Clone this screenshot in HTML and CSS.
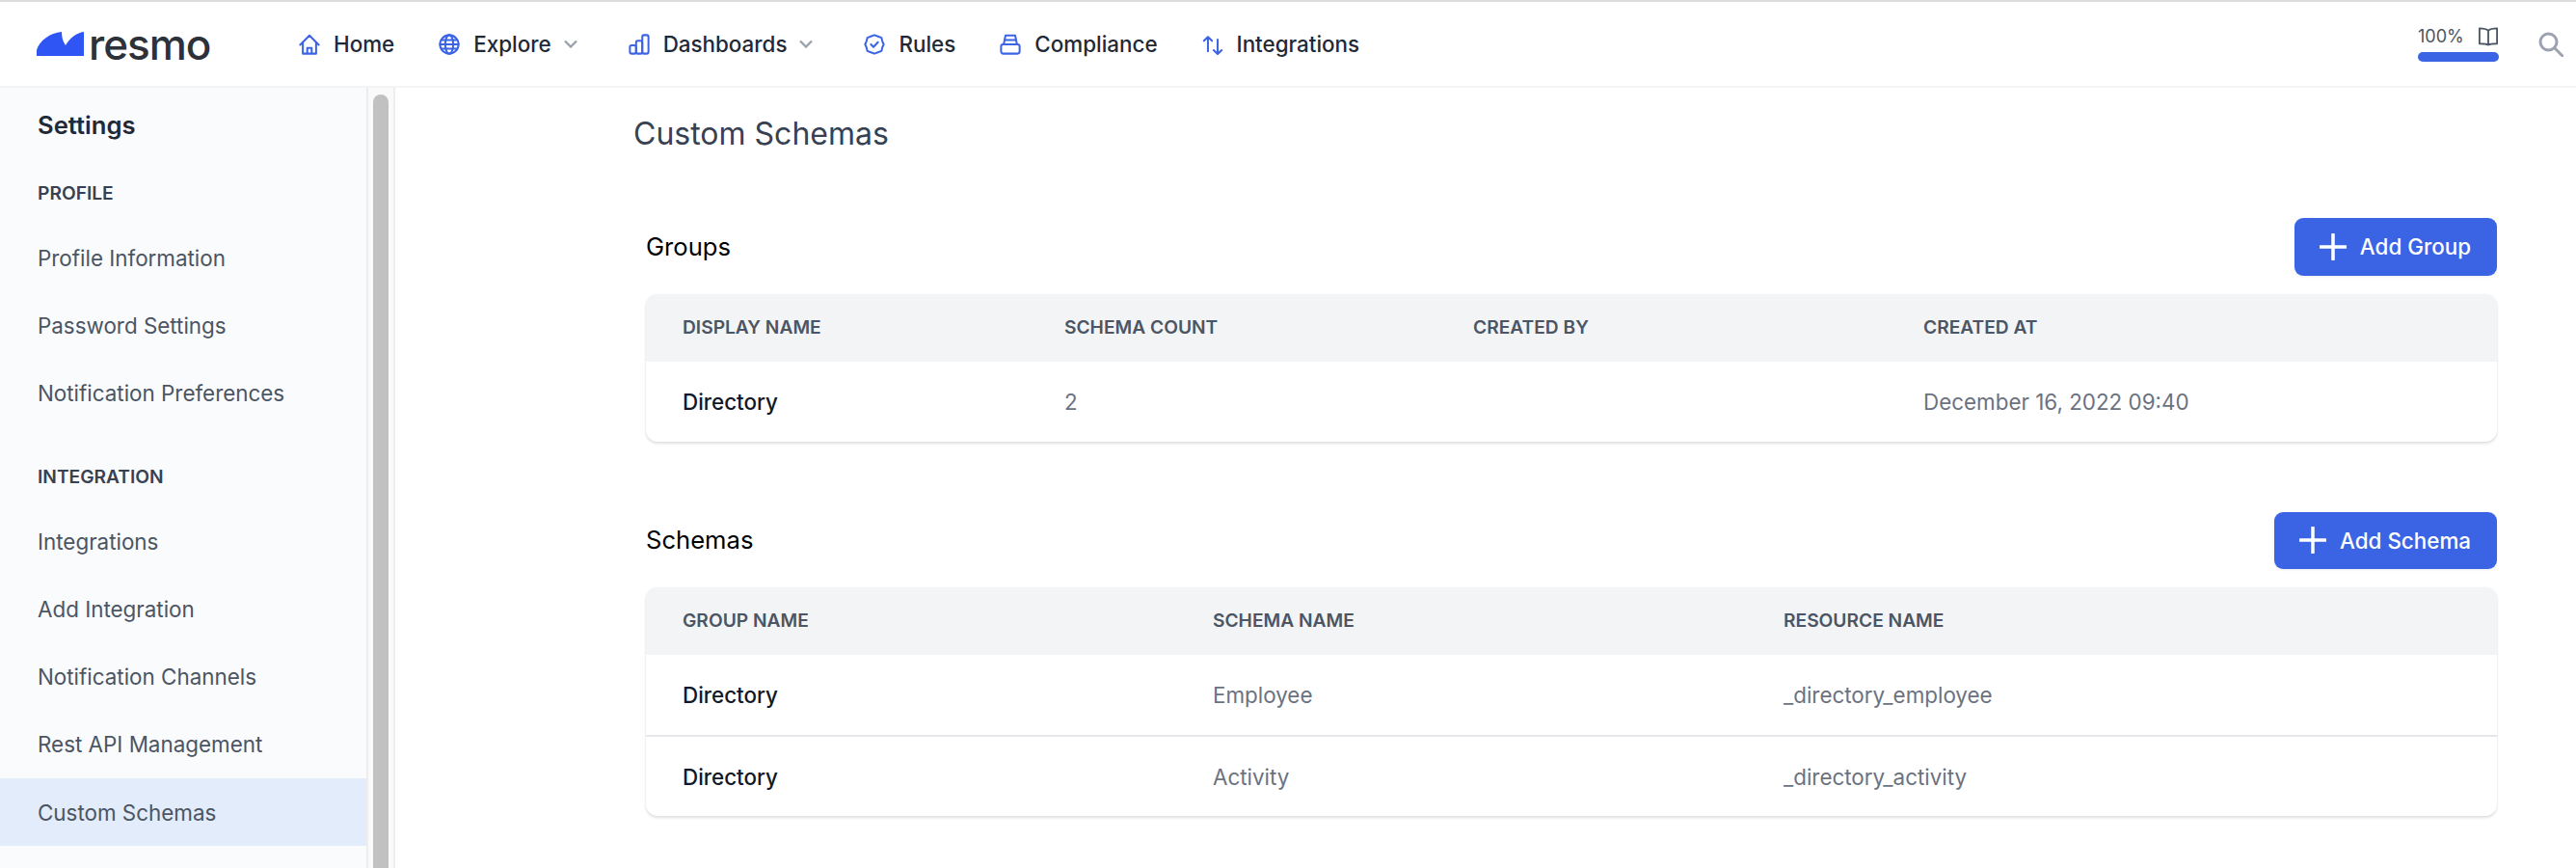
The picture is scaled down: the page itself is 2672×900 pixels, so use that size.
FILE: index.html
```html
<!DOCTYPE html>
<html lang="en">
<head>
<meta charset="utf-8">
<title>Custom Schemas</title>
<link rel="stylesheet" href="styles.css">
</head>
<body>
<header class="topbar">
  <div class="logo">
    <svg class="logo-mark" viewBox="0 0 49 25"><path d="M0 25V19C3 9 14 1 26 0C26 5 27 10 30 14C34 7 41 1 49 0V25Z" fill="#2f55f5"/></svg>
    <span class="logo-text">resmo</span>
  </div>
  <nav class="nav">
    <a class="nav-item"><svg class="nav-icon" viewBox="0 0 24 24"><path d="M1.500 12.500 12 2 22.500 12.500M4.500 10V22.500H19.500V10M9.500 22.500V16H14.500V22.500"/></svg>Home</a>
    <a class="nav-item"><svg class="nav-icon" viewBox="0 0 24 24"><circle cx="12" cy="12" r="10.500"/><ellipse cx="12" cy="12" rx="4.500" ry="10.500"/><path d="M1.500 12H22.500M3.500 7H20.500M3.500 17H20.500"/></svg>Explore<svg class="chevron" viewBox="0 0 14 9"><path d="M1 1.500 7 7.500 13 1.500"/></svg></a>
    <a class="nav-item"><svg class="nav-icon" viewBox="0 0 24 24"><rect x="1.500" y="13" width="7" height="9.500" rx="2"/><rect x="8.500" y="8" width="7" height="14.500" rx="2"/><rect x="15.500" y="1.500" width="7" height="21" rx="2"/></svg>Dashboards<svg class="chevron" viewBox="0 0 14 9"><path d="M1 1.500 7 7.500 13 1.500"/></svg></a>
    <a class="nav-item"><svg class="nav-icon" viewBox="0 0 24 24"><path d="M12 1.500 16 3 20 4.500 21 8.500 22.500 12 21 15.500 20 19.500 16 21 12 22.500 8 21 4 19.500 3 15.500 1.500 12 3 8.500 4 4.500 8 3Z"/><path d="M8 12 11 15 16 9.500"/></svg>Rules</a>
    <a class="nav-item"><svg class="nav-icon" viewBox="0 0 24 24"><rect x="1.500" y="12" width="21" height="10.500" rx="2.500"/><path d="M4.500 12 6.500 2H17.500L19.500 12M5.500 7H18.500"/></svg>Compliance</a>
    <a class="nav-item"><svg class="nav-icon" viewBox="0 0 24 24"><path d="M6.500 20V3.500M2 8 6.500 3.500 11 8M17.500 6.500V23M13 18.500 17.500 23 22 18.500"/></svg>Integrations</a>
  </nav>
  <div class="top-right">
    <div class="progress-block">
      <div class="progress-label"><span>100%</span><svg class="book" viewBox="0 0 24 22"><path d="M12 4C10 2 7 1.500 2 1.500V19C7 19 10 19 12 20.500C14 19 17 19 22 19V1.500C17 1.500 14 2 12 4ZM12 4V20.500"/></svg></div>
      <div class="progress-bar"></div>
    </div>
    <svg class="search" viewBox="0 0 26 26"><circle cx="10.500" cy="10.500" r="8.500"/><path d="M16.500 16.500 25 25"/></svg>
  </div>
</header>
<div class="shell">
  <aside class="sidebar">
    <h2 class="side-title">Settings</h2>
    <h3 class="side-group">PROFILE</h3>
    <a class="side-item">Profile Information</a>
    <a class="side-item">Password Settings</a>
    <a class="side-item">Notification Preferences</a>
    <h3 class="side-group side-group-next">INTEGRATION</h3>
    <a class="side-item">Integrations</a>
    <a class="side-item">Add Integration</a>
    <a class="side-item">Notification Channels</a>
    <a class="side-item">Rest API Management</a>
    <a class="side-item active">Custom Schemas</a>
  </aside>
  <div class="scrolltrack"><div class="scrollthumb"></div></div>
  <main class="main">
    <h1 class="page-title">Custom Schemas</h1>
    <section class="section section-groups">
      <div class="section-head">
        <h2 class="section-title">Groups</h2>
        <button class="btn"><svg class="plus" viewBox="0 0 28 28"><path d="M14 1V27M1 14H27"/></svg>Add Group</button>
      </div>
      <table class="table">
        <thead><tr><th class="g1">DISPLAY NAME</th><th class="g2">SCHEMA COUNT</th><th class="g3">CREATED BY</th><th>CREATED AT</th></tr></thead>
        <tbody><tr><td class="name">Directory</td><td>2</td><td></td><td>December 16, 2022 09:40</td></tr></tbody>
      </table>
    </section>
    <section class="section section-schemas">
      <div class="section-head">
        <h2 class="section-title">Schemas</h2>
        <button class="btn"><svg class="plus" viewBox="0 0 28 28"><path d="M14 1V27M1 14H27"/></svg>Add Schema</button>
      </div>
      <table class="table">
        <thead><tr><th class="s1">GROUP NAME</th><th class="s2">SCHEMA NAME</th><th>RESOURCE NAME</th></tr></thead>
        <tbody>
          <tr><td class="name">Directory</td><td>Employee</td><td>_directory_employee</td></tr>
          <tr><td class="name">Directory</td><td>Activity</td><td>_directory_activity</td></tr>
        </tbody>
      </table>
    </section>
  </main>
</div>
</body>
</html>
```

FILE: styles.css
```css
* { box-sizing: border-box; }
html, body { margin: 0; height: 900px; overflow: hidden; background: #fff; }
body { font-family: Inter, "Liberation Sans", sans-serif; color: #1f2937; }
h1, h2, h3 { margin: 0; font-weight: 400; }

.topbar {
  height: 91px;
  border-top: 2px solid #dcdcdc;
  border-bottom: 2px solid #f3f4f6;
  display: flex;
  align-items: center;
  padding-left: 38px;
  background: #fff;
}
.logo { display: flex; align-items: center; gap: 5px; width: 272px; }
.logo-mark { width: 49px; height: 25px; }
.logo-text { font-size: 44px; line-height: 30px; font-weight: 500; color: #2d3139; letter-spacing: -1px; }
.nav { display: flex; align-items: center; gap: 46px; }
.nav-item { display: flex; align-items: center; font-size: 22.400px; font-weight: 500; color: #1f2937; }
.nav-icon { width: 22px; height: 22px; margin-right: 14px; fill: none; stroke: #3b64e5; stroke-width: 2.200; stroke-linejoin: round; stroke-linecap: round; }
.chevron { width: 14px; height: 9px; margin: 0 7px 0 13px; fill: none; stroke: #9ca3af; stroke-width: 2.400; }
.top-right { margin-left: auto; display: flex; align-items: center; padding-right: 13px; gap: 41px; }
.progress-block { width: 84px; }
.progress-label { display: flex; justify-content: space-between; align-items: center; font-size: 18px; line-height: 22px; color: #4b5563; }
.book { width: 22px; height: 20px; fill: none; stroke: #4b5563; stroke-width: 2; stroke-linejoin: round; }
.progress-bar { height: 10px; margin-top: 5px; border-radius: 5px; background: #3b64e5; }
.search { width: 26px; height: 26px; fill: none; stroke: #9ca3af; stroke-width: 3; stroke-linecap: round; }

.shell { display: flex; height: 809px; }
.sidebar { width: 380px; flex: none; background: #fafbfd; display: flex; flex-direction: column; }
.side-title { padding: 25px 39px 0; font-size: 25.600px; line-height: 28px; font-weight: 600; color: #1f2937; }
.side-group { padding: 42px 39px 18px; font-size: 19.200px; line-height: 28px; font-weight: 600; color: #374151; }
.side-group-next { padding-top: 37px; }
.side-item { display: flex; align-items: center; flex: none; height: 70.300px; padding-left: 39px; font-size: 22.400px; color: #4b5563; }
.side-item.active { background: #e2ecfb; }
.scrolltrack { width: 30px; flex: none; background: #fafafa; border-left: 2px solid #ededed; border-right: 2px solid #ededed; padding: 7px 5px 0; }
.scrollthumb { height: 100%; background: #c1c1c1; border-radius: 8px 8px 0 0; }

.main { flex: 1; padding: 30px 82px 0 247px; min-width: 0; }
.page-title { font-size: 32px; line-height: 36px; color: #374151; }
.section { margin-left: 13px; }
.section-groups { margin-top: 69px; }
.section-schemas { margin-top: 73px; }
.section-head { display: flex; justify-content: space-between; align-items: center; margin-bottom: 19px; }
.section-title { font-size: 25.600px; line-height: 30px; font-weight: 400; color: #000; }
.btn {
  display: flex; align-items: center; height: 59.500px; padding: 0 27px 0 26px;
  border: 0; border-radius: 9px; background: #3b64e5; color: #fff;
  font: 500 22.400px Inter, sans-serif; box-shadow: 0 1px 3px rgba(0,0,0,.08);
}
.plus { width: 28px; height: 28px; margin-right: 14px; fill: none; stroke: #fff; stroke-width: 3.500; stroke-linecap: round; }
.table {
  width: 100%; border-collapse: separate; border-spacing: 0; table-layout: fixed;
  border-radius: 12px; background: #fff;
  box-shadow: 0 2px 3px rgba(0,0,0,.12), 0 0 2px rgba(0,0,0,.06);
}
.table th {
  height: 70px; padding: 0 0 2px 38px; background: #f3f4f6; text-align: left;
  font-size: 19.200px; font-weight: 600; color: #4b5563;
}
.table th:first-child { border-top-left-radius: 12px; }
.table th:last-child { border-top-right-radius: 12px; }
.table td { height: 84px; padding: 0 0 0 38px; font-size: 22.400px; color: #6b7280; border-top: 2px solid #e5e7eb; }
.table tbody tr:first-child td { height: 83px; border-top: 0; }
.table td.name { font-weight: 500; color: #111827; }
.g1 { width: 396px; }
.g2 { width: 424px; }
.g3 { width: 467px; }
.s1 { width: 550px; }
.s2 { width: 592px; }
```
